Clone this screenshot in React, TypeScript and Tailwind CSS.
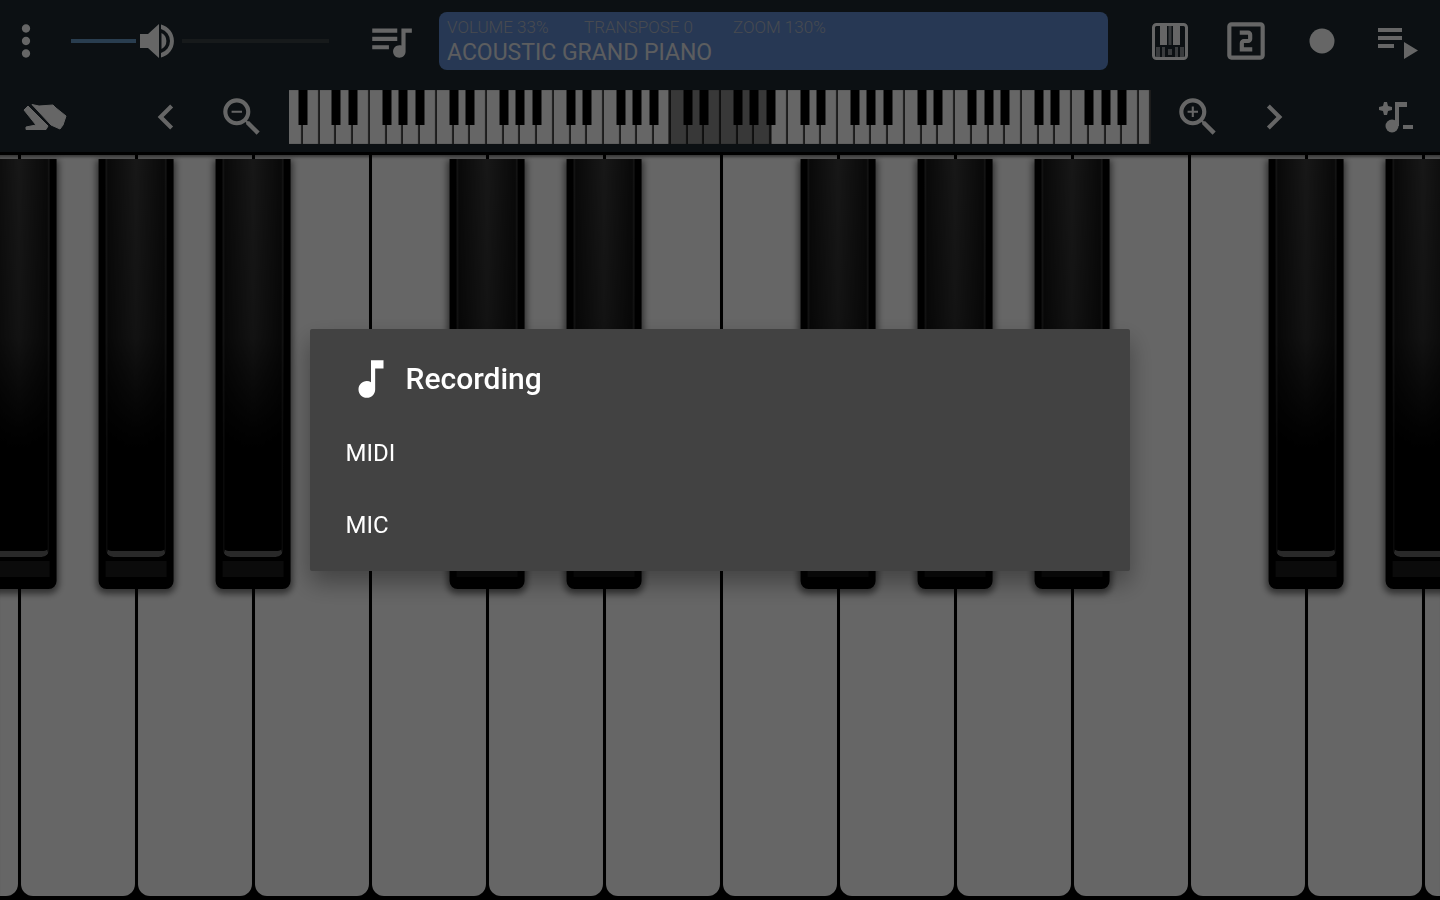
import React, { useState } from 'react';
import {
  MdChevronLeft,
  MdChevronRight,
  MdMoreVert,
  MdMusicNote,
  MdOutlineLooksTwo,
  MdQueueMusic,
  MdZoomIn,
  MdZoomOut,
} from 'react-icons/md';

interface IconButtonProps {
  label: string;
  className?: string;
  children: React.ReactNode;
}

const IconButton: React.FC<IconButtonProps> = ({ label, className = 'w-19', children }) => (
  <button
    type="button"
    aria-label={label}
    className={`flex h-14 shrink-0 items-center justify-center text-white ${className}`}
  >
    {children}
  </button>
);

const SpeakerIcon = () => (
  <svg viewBox="0 0 40 36" className="h-9 w-10" fill="currentColor">
    <path d="M2 11h8L21 1v34L10 25H2z" />
    <path d="M23.500 10a9 9 0 0 1 0 16z" />
    <path d="M23 1.500a17 17 0 0 1 0 33v-4.500a12.500 12.500 0 0 0 0-24z" />
  </svg>
);

const PianoIcon = () => (
  <svg viewBox="0 0 48 48" className="size-12">
    <rect x="7.500" y="7.500" width="33" height="34" rx="3" fill="none" stroke="currentColor" strokeWidth="3" />
    <path d="M14 8h7v20h-7zM27 8h7v20h-7z" fill="currentColor" />
    <path d="M22.500 8h3v20h-3z" fill="currentColor" opacity="0.5" />
    <path d="M10 30h4v10h-4zM16 30h3v10h-3zM22 32h4v6h-4zM29 30h3v10h-3zM34 30h4v10h-4z" fill="currentColor" opacity="0.5" />
  </svg>
);

const PlaylistIcon = () => (
  <svg viewBox="0 0 48 48" className="size-12" fill="currentColor">
    <path d="M4 11h24v4H4zM4 19h24v4H4zM4 27h16v4H4zM30 25l14 8.500-14 8.500z" />
  </svg>
);

const SwipeIcon = () => (
  <svg viewBox="0 0 48 48" className="size-12" fill="currentColor" stroke="currentColor" strokeLinejoin="round">
    <path d="M12 11.500l7 1.500 14-1 3 3 10 8-3 9-3 4-9-4z" />
    <path d="M4 17l4-4 20 20-2 3.500H6V34l10-2z" />
  </svg>
);

const TuneIcon = () => (
  <svg viewBox="0 0 48 48" className="size-12" fill="currentColor">
    <path d="M10 9h3l1 4 4 1v3l-4 1-1 4h-3l-1-4-4-1v-3l4-1zM29 32h10v4H29z" />
    <path d="M21 9h12v5h-8v19h-4z" />
    <circle cx="18" cy="33" r="6.500" />
  </svg>
);

// Full 88 key range, A0 to C8. Sharps follow A, C, D, F and G.
const SHARP_AFTER = [0, 2, 3, 5, 6];
const OVERVIEW_KEYS = Array.from({ length: 52 }, (_, i) => ({
  sharp: i < 51 && SHARP_AFTER.includes(i % 7),
  size: i === 0 ? 'flex-[84]' : i === 51 ? 'flex-[73]' : 'flex-[100]',
}));

const Overview = () => (
  <div className="relative isolate flex h-[54px] min-w-0 flex-1 bg-white">
    {OVERVIEW_KEYS.map((key, i) => (
      <div key={i} className={`relative shadow-[inset_-2px_0_1px_#484848] ${key.size}`}>
        {key.sharp && (
          <div className="absolute top-0 right-0 z-20 h-[35px] w-[9px] translate-x-1/2 bg-black" />
        )}
      </div>
    ))}
    <div className="absolute inset-y-0 left-[44%] z-10 w-[12%] bg-black/45" />
  </div>
);

// The outer keys are cut off by the edges of the screen
const KEYS = [
  { size: 'flex-[19]', shape: 'mr-px rounded-br-xl', sharp: false },
  { size: 'flex-[117]', shape: 'mr-px ml-[2px] rounded-b-xl', sharp: true },
  { size: 'flex-[117]', shape: 'mr-px ml-[2px] rounded-b-xl', sharp: true },
  { size: 'flex-[117]', shape: 'mr-px ml-[2px] rounded-b-xl', sharp: true },
  { size: 'flex-[117]', shape: 'mr-px ml-[2px] rounded-b-xl', sharp: false },
  { size: 'flex-[117]', shape: 'mr-px ml-[2px] rounded-b-xl', sharp: true },
  { size: 'flex-[117]', shape: 'mr-px ml-[2px] rounded-b-xl', sharp: true },
  { size: 'flex-[117]', shape: 'mr-px ml-[2px] rounded-b-xl', sharp: false },
  { size: 'flex-[117]', shape: 'mr-px ml-[2px] rounded-b-xl', sharp: true },
  { size: 'flex-[117]', shape: 'mr-px ml-[2px] rounded-b-xl', sharp: true },
  { size: 'flex-[117]', shape: 'mr-px ml-[2px] rounded-b-xl', sharp: true },
  { size: 'flex-[117]', shape: 'mr-px ml-[2px] rounded-b-xl', sharp: false },
  { size: 'flex-[117]', shape: 'mr-px ml-[2px] rounded-b-xl', sharp: true },
  { size: 'flex-[17]', shape: 'ml-[2px] rounded-bl-xl', sharp: true },
];

const BlackKey = () => (
  <div className="absolute top-1 left-0 z-10 flex h-[58%] w-[5.2vw] -translate-x-1/2 flex-col rounded-b-lg bg-black px-[7px] shadow-[0_3px_6px_2px_rgba(0,0,0,0.5)]">
    <div className="flex-1 overflow-hidden rounded-b-lg bg-linear-to-b from-[#3c3c3c] via-[#303030] via-45% to-black to-85%">
      <div className="h-full rounded-b-lg border-x-2 border-b-6 border-x-white/10 border-b-[#686868] bg-linear-to-r from-black/60 via-transparent to-black/60" />
    </div>
    <div className="mt-1 mb-3 h-4 bg-[#1c1c1c]" />
  </div>
);

const Keyboard = () => (
  <main className="isolate flex flex-1 overflow-hidden border-t border-black bg-black pb-1">
    {KEYS.map((key, i) => (
      <div key={i} className={`relative flex min-w-0 ${key.size}`}>
        <div className={`flex-1 bg-white shadow-[inset_0_4px_3px_-2px_#888] ${key.shape}`} />
        {key.sharp && <BlackKey />}
      </div>
    ))}
  </main>
);

const VolumeSlider = () => {
  const [volume, setVolume] = useState(33);

  return (
    <div className="relative ml-[19px] flex h-9 w-[258px] shrink-0 items-center">
      <div className="h-1 bg-[#6698c6]" style={{ width: `${volume - 8}%` }} />
      <div className="ml-[2px] text-white">
        <SpeakerIcon />
      </div>
      <div className="ml-1 h-1 flex-1 bg-[#3a4145]" />
      <input
        type="range"
        aria-label="Volume"
        min={8}
        max={92}
        value={volume}
        onChange={(e) => setVolume(Number(e.target.value))}
        className="absolute inset-0 h-full w-full cursor-pointer opacity-0"
      />
    </div>
  );
};

const RecordingDialog = () => (
  <div className="fixed inset-0 z-30 flex items-center justify-center bg-black/60">
    <div
      role="dialog"
      aria-labelledby="recording-title"
      className="w-[57%] rounded-xs bg-[#424242] pb-[10px] text-white shadow-[0_12px_24px_rgba(0,0,0,0.35)]"
    >
      <div className="flex h-[88px] items-center pt-3 pl-9">
        <MdMusicNote className="size-[50px]" />
        <h2 id="recording-title" className="ml-[10px] text-[30px] leading-9 font-medium">
          Recording
        </h2>
      </div>
      <button type="button" className="flex h-18 w-full items-center pl-9 text-2xl">
        MIDI
      </button>
      <button type="button" className="flex h-18 w-full items-center pl-9 text-2xl">
        MIC
      </button>
    </div>
  </div>
);

const App = () => {
  return (
    <div className="flex min-h-screen flex-col bg-black font-['Roboto',sans-serif]">
      <header className="border-b-2 border-black bg-[#1e2a30]">
        <div className="flex h-[82px] items-center pr-1">
          <IconButton label="Menu" className="w-13">
            <MdMoreVert className="size-[50px]" />
          </IconButton>
          <VolumeSlider />
          <IconButton label="Instruments" className="ml-6 w-19">
            <MdQueueMusic className="size-[50px]" />
          </IconButton>
          <div className="mr-6 ml-[10px] flex h-[58px] min-w-0 flex-1 flex-col justify-center rounded-lg bg-[#628dd2] pl-2 whitespace-nowrap">
            <div className="flex text-[17px] leading-6 font-light text-[#b2bac8]">
              <span className="w-[137px]">VOLUME 33%</span>
              <span className="w-[149px]">TRANSPOSE 0</span>
              <span>ZOOM 130%</span>
            </div>
            <div className="text-[23px] leading-7 text-[#e6e9ee]">ACOUSTIC GRAND PIANO</div>
          </div>
          <IconButton label="Keyboard layout">
            <PianoIcon />
          </IconButton>
          <IconButton label="Two rows">
            <MdOutlineLooksTwo className="size-[50px]" />
          </IconButton>
          <IconButton label="Record">
            <svg viewBox="0 0 48 48" className="size-12" fill="currentColor">
              <circle cx="24" cy="24" r="12.500" />
            </svg>
          </IconButton>
          <IconButton label="Recordings">
            <PlaylistIcon />
          </IconButton>
        </div>

        <div className="flex h-[70px] items-center pr-1">
          <IconButton label="Slide mode" className="w-22">
            <SwipeIcon />
          </IconButton>
          <IconButton label="Scroll left" className="ml-10 w-19">
            <MdChevronLeft className="size-[50px]" />
          </IconButton>
          <IconButton label="Zoom out">
            <MdZoomOut className="size-[50px]" />
          </IconButton>
          <div className="mx-[9px] flex min-w-0 flex-1">
            <Overview />
          </div>
          <IconButton label="Zoom in">
            <MdZoomIn className="size-[50px]" />
          </IconButton>
          <IconButton label="Scroll right">
            <MdChevronRight className="size-[50px]" />
          </IconButton>
          <IconButton label="Transpose" className="ml-12 w-19">
            <TuneIcon />
          </IconButton>
        </div>
      </header>

      <Keyboard />
      <RecordingDialog />
    </div>
  );
};

export default App;
